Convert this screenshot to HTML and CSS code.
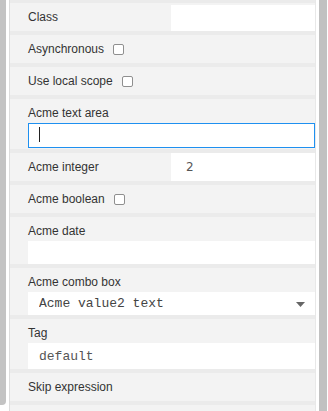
FILE: index.html
```html
<!doctype html>
<html lang="en">
  <head>
    <meta charset="UTF-8" />
    <meta name="viewport" content="width=device-width, initial-scale=1.0" />
    <title>Properties</title>
    <link rel="stylesheet" href="styles.css">
  </head>
  <body>
    <div class="frame">
      <div class="gutter"></div>
      <div class="panel">
        <div class="prop inline first">
          <label>Class</label>
          <input type="text" class="field" />
        </div>
        <div class="prop simple">
          <label>Asynchronous</label>
          <input type="checkbox" class="check" />
        </div>
        <div class="prop simple">
          <label>Use local scope</label>
          <input type="checkbox" class="check" />
        </div>
        <div class="prop stack">
          <label>Acme text area</label>
          <div class="area-wrap">
            <textarea class="area" rows="1"></textarea>
            <span class="caret"></span>
          </div>
        </div>
        <div class="prop inline">
          <label>Acme integer</label>
          <input type="number" class="field num" value="2" />
        </div>
        <div class="prop simple">
          <label>Acme boolean</label>
          <input type="checkbox" class="check" />
        </div>
        <div class="prop stack">
          <label>Acme date</label>
          <input type="text" class="field block" />
        </div>
        <div class="prop stack">
          <label>Acme combo box</label>
          <div class="select-wrap">
            <select class="field block combo">
              <option>Acme value2 text</option>
            </select>
            <svg class="arrow" width="9" height="5" viewBox="0 0 9 5">
              <path d="M0 0h9L4.5 5z" fill="#666" />
            </svg>
          </div>
        </div>
        <div class="prop stack">
          <label>Tag</label>
          <input type="text" class="field block tag" value="default" />
        </div>
        <div class="prop simple">
          <label>Skip expression</label>
        </div>
        <div class="prop simple"></div>
      </div>
      <div class="scrollbar"></div>
    </div>
  </body>
</html>
```

FILE: styles.css
```css
body {
  margin: 0;
  background: #fff;
  font-family: "Liberation Sans", Arial, sans-serif;
  font-size: 12px;
  color: #333;
  overflow: hidden;
}
.frame {
  display: flex;
  height: 411px;
}
.gutter {
  width: 6px;
  height: 405px;
  background: #c3c3c3;
  border-bottom-right-radius: 4px;
  margin-right: 3px;
}
.panel {
  width: 305px;
  border-left: 1px solid #dcdcdc;
  border-right: 1px solid #e8e8e8;
  background: #ebebeb;
  padding-top: 3px;
  display: flex;
  flex-direction: column;
  gap: 4px;
  overflow: hidden;
}
.scrollbar {
  width: 8px;
  margin-left: 3px;
  background: #c1c1c1;
}
.prop {
  background: #f3f3f3;
  padding-left: 18px;
  flex-shrink: 0;
}
.simple {
  height: 28px;
  display: flex;
  align-items: center;
}
.inline {
  height: 28px;
  display: flex;
}
.inline label {
  width: 143px;
  line-height: 28px;
  flex-shrink: 0;
}
.inline .field {
  flex: 1;
  min-width: 0;
}
.first .field {
  margin-top: 2px;
}
.stack label {
  display: block;
  height: 24px;
  line-height: 28px;
}
.field {
  box-sizing: border-box;
  border: none;
  outline: none;
  background: #fff;
  margin: 0;
  padding: 0 0 0 11px;
  font-family: "Liberation Mono", "Courier New", monospace;
  font-size: 13px;
  color: #555;
}
.block {
  display: block;
  width: 100%;
  height: 23px;
}
.num {
  padding-left: 15px;
  font-family: "DejaVu Sans", sans-serif;
  font-size: 12px;
  color: #555;
  -moz-appearance: textfield;
}
.num::-webkit-inner-spin-button,
.num::-webkit-outer-spin-button {
  -webkit-appearance: none;
  margin: 0;
}
.tag {
  height: 26px;
}
.check {
  appearance: none;
  -webkit-appearance: none;
  width: 11px;
  height: 11px;
  margin: 0 0 0 9px;
  border: 1px solid #8f8f8f;
  border-radius: 2px;
  background: #fff;
  box-sizing: border-box;
}
.area-wrap {
  position: relative;
  height: 26px;
}
.area {
  display: block;
  box-sizing: border-box;
  width: 100%;
  height: 25px;
  margin: 0;
  border: 1px solid #1e90f0;
  outline: none;
  resize: none;
  background: #fff;
  padding: 0;
}
.caret {
  position: absolute;
  left: 11px;
  top: 4px;
  width: 1px;
  height: 15px;
  background: #222;
}
.select-wrap {
  position: relative;
}
.combo {
  appearance: none;
  -webkit-appearance: none;
  border-radius: 0;
  color: #444;
}
.arrow {
  position: absolute;
  right: 10px;
  top: 10px;
}
```
